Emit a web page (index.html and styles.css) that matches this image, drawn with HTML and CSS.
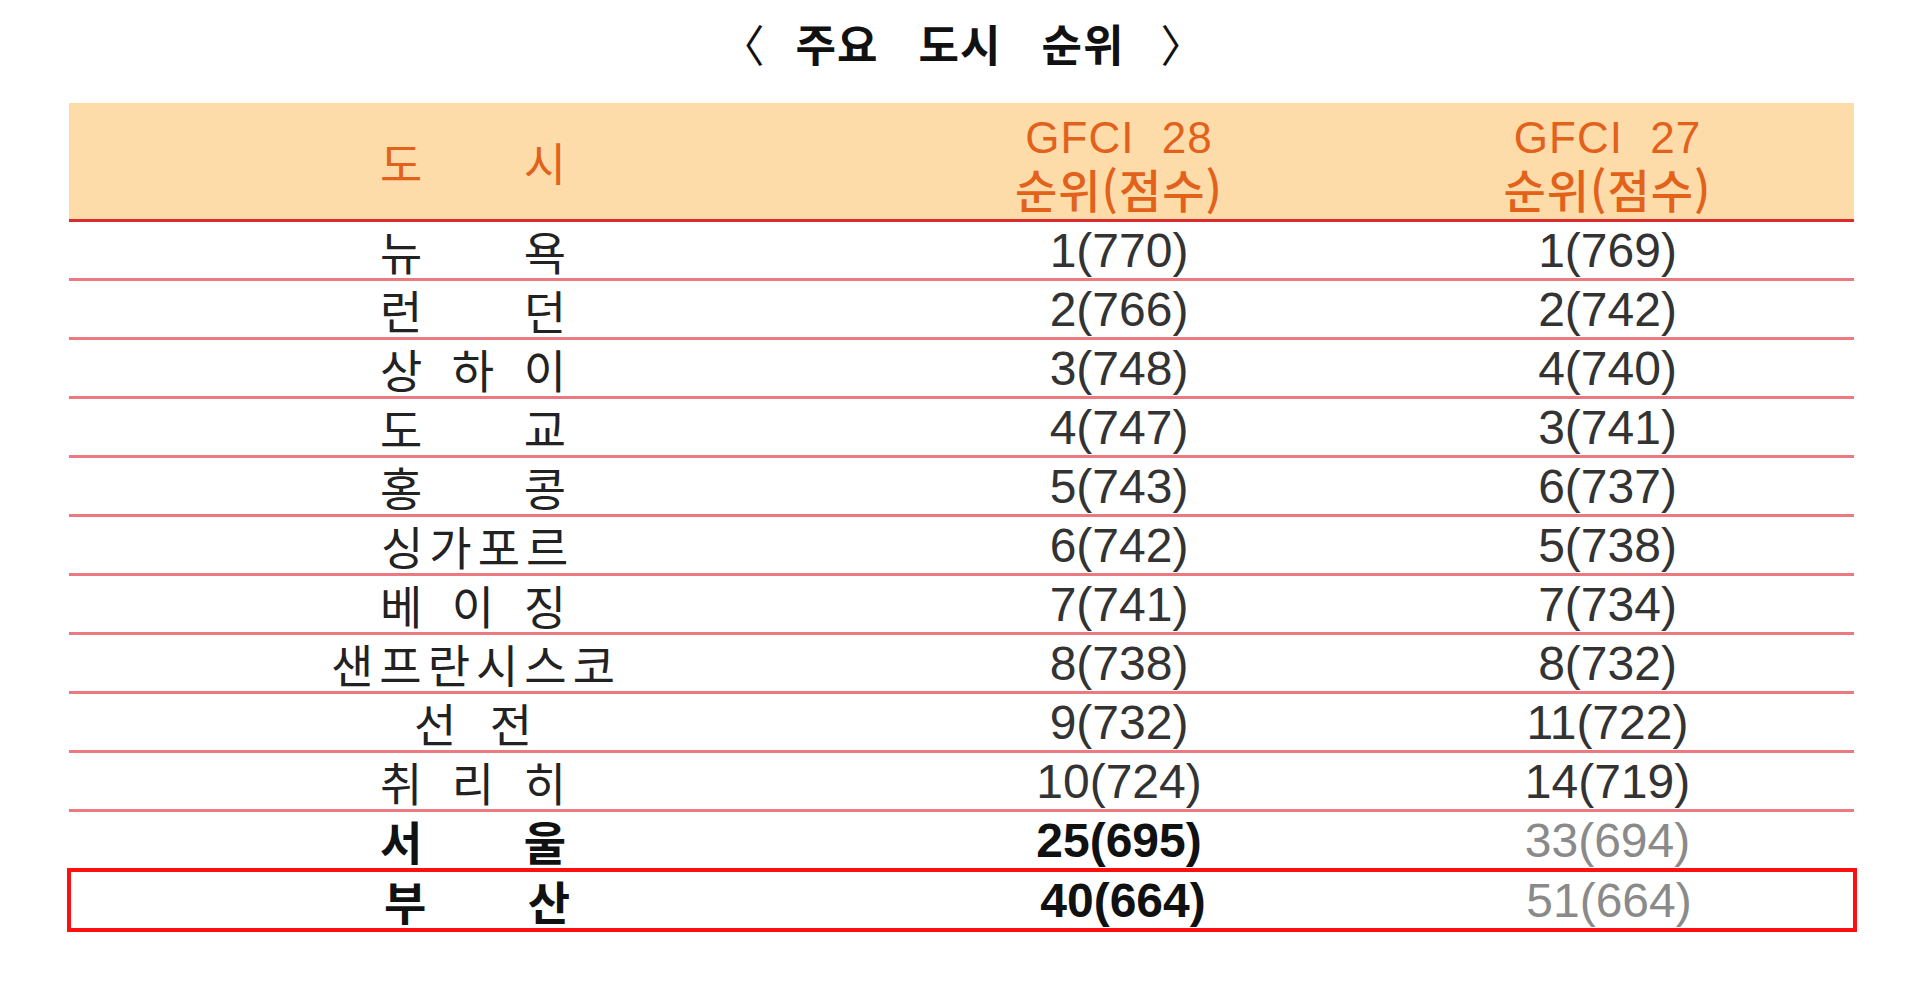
FILE: index.html
```html
<!DOCTYPE html>
<html lang="ko">
<head>
<meta charset="utf-8">
<title>주요 도시 순위</title>
<link rel="stylesheet" href="styles.css">
</head>
<body>
<div class="page">
  <h1 class="title"><span class="br open">〈</span><span class="word">주요</span><span class="word">도시</span><span class="word">순위</span><span class="br close">〉</span></h1>
  <div class="ranking">
    <div class="row head">
      <div class="cell city"><span class="name">도 시</span></div>
      <div class="cell"><span class="en">GFCI 28</span><span class="ko">순위(점수)</span></div>
      <div class="cell"><span class="en">GFCI 27</span><span class="ko">순위(점수)</span></div>
    </div>
    <div class="row">
      <div class="cell city"><span class="name">뉴 욕</span></div>
      <div class="cell num">1(770)</div>
      <div class="cell num">1(769)</div>
    </div>
    <div class="row">
      <div class="cell city"><span class="name">런 던</span></div>
      <div class="cell num">2(766)</div>
      <div class="cell num">2(742)</div>
    </div>
    <div class="row">
      <div class="cell city"><span class="name">상 하 이</span></div>
      <div class="cell num">3(748)</div>
      <div class="cell num">4(740)</div>
    </div>
    <div class="row">
      <div class="cell city"><span class="name">도 교</span></div>
      <div class="cell num">4(747)</div>
      <div class="cell num">3(741)</div>
    </div>
    <div class="row">
      <div class="cell city"><span class="name">홍 콩</span></div>
      <div class="cell num">5(743)</div>
      <div class="cell num">6(737)</div>
    </div>
    <div class="row">
      <div class="cell city"><span class="name tight">싱가포르</span></div>
      <div class="cell num">6(742)</div>
      <div class="cell num">5(738)</div>
    </div>
    <div class="row">
      <div class="cell city"><span class="name">베 이 징</span></div>
      <div class="cell num">7(741)</div>
      <div class="cell num">7(734)</div>
    </div>
    <div class="row">
      <div class="cell city"><span class="free long">샌프란시스코</span></div>
      <div class="cell num">8(738)</div>
      <div class="cell num">8(732)</div>
    </div>
    <div class="row">
      <div class="cell city"><span class="name short">선 전</span></div>
      <div class="cell num">9(732)</div>
      <div class="cell num">11(722)</div>
    </div>
    <div class="row">
      <div class="cell city"><span class="name">취 리 히</span></div>
      <div class="cell num">10(724)</div>
      <div class="cell num">14(719)</div>
    </div>
    <div class="row korea seoul">
      <div class="cell city"><span class="name">서 울</span></div>
      <div class="cell num">25(695)</div>
      <div class="cell num prev">33(694)</div>
    </div>
    <div class="row korea busan">
      <div class="cell city"><span class="name">부 산</span></div>
      <div class="cell num">40(664)</div>
      <div class="cell num prev">51(664)</div>
    </div>
  </div>
</div>
</body>
</html>
```

FILE: styles.css
```css
html, body {
  margin: 0;
  padding: 0;
  background: #ffffff;
}

body {
  font-family: "Noto Sans CJK KR", "Liberation Sans", sans-serif;
  color: #222222;
}

.page {
  width: 1920px;
  height: 982px;
  overflow: hidden;
}

.title {
  margin: 0;
  height: 103px;
  display: flex;
  align-items: center;
  justify-content: center;
  gap: 40px;
  padding-bottom: 18px;
  padding-left: 2px;
  box-sizing: border-box;
  font-size: 44px;
  font-weight: 700;
  letter-spacing: 1px;
  color: #111111;
  line-height: 1;
}

.title .br {
  font-weight: 400;
}

.title .open {
  margin-left: -18px;
  margin-right: -10px;
}

.title .close {
  margin-left: -4px;
  margin-right: -22px;
}

.ranking {
  margin-left: 69px;
  width: 1785px;
}

.row {
  display: grid;
  grid-template-columns: 808px 484px 1fr;
  height: 56px;
  border-bottom: 3px solid #ec7880;
}

.cell {
  display: flex;
  align-items: center;
  justify-content: center;
}

.head {
  height: 116px;
  background: #fddcaa;
  border-bottom: 3px solid #d92a30;
  color: #e2621c;
}

.head .cell {
  flex-direction: column;
  line-height: 50px;
}

.head .en {
  font-family: "Liberation Sans", sans-serif;
  font-size: 44px;
  letter-spacing: 1px;
  word-spacing: 14px;
  margin-top: 4px;
}

.head .ko {
  font-size: 46px;
  font-weight: 500;
  letter-spacing: 1px;
}

.name {
  display: inline-block;
  width: 186px;
  font-size: 46px;
  line-height: 56px;
  text-align: justify;
  text-align-last: justify;
  white-space: nowrap;
}

.name.tight {
  text-align: left;
  text-align-last: left;
  letter-spacing: 6px;
  padding-left: 2px;
}

.name.short {
  width: 118px;
}

.free {
  font-size: 46px;
  line-height: 56px;
  white-space: pre;
}

.free.long {
  letter-spacing: 6px;
  margin-left: 6px;
}

.num {
  font-family: "Liberation Sans", sans-serif;
  font-size: 48px;
  color: #333333;
}

.korea .name,
.korea .num {
  font-weight: 700;
  color: #111111;
}

.korea .num.prev {
  font-weight: 400;
  color: #8a8a8a;
}

.seoul {
  border-bottom: none;
}

.busan {
  height: 56px;
  border: 4px solid #ff1010;
  margin-left: -2px;
  margin-right: -3px;
  padding-left: 2px;
}
```
